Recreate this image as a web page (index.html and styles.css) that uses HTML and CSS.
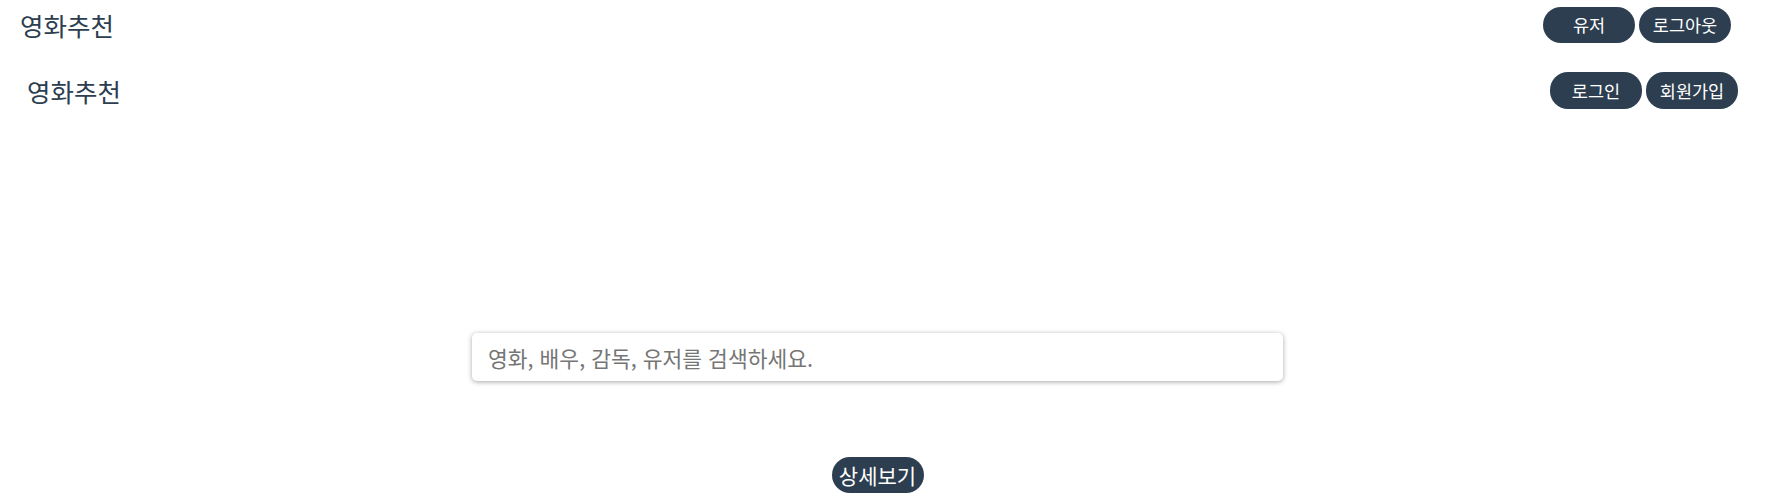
FILE: index.html
```html
<!DOCTYPE html>
<html lang="ko">
<head>
<meta charset="utf-8">
<title>영화추천</title>
<link rel="stylesheet" href="styles.css">
</head>
<body>
  <header class="nav nav-user">
    <span class="brand">영화추천</span>
    <div class="actions">
      <button class="pill">유저</button>
      <button class="pill">로그아웃</button>
    </div>
  </header>
  <header class="nav nav-guest">
    <span class="brand">영화추천</span>
    <div class="actions">
      <button class="pill">로그인</button>
      <button class="pill">회원가입</button>
    </div>
  </header>
  <main class="main">
    <div class="search">
      <input class="search-input" type="text" placeholder="영화, 배우, 감독, 유저를 검색하세요.">
    </div>
    <button class="detail">상세보기</button>
  </main>
</body>
</html>
```

FILE: styles.css
```css
* { box-sizing: border-box; }
html, body {
  margin: 0;
  background: #ffffff;
}
body {
  font-family: "Noto Sans CJK KR", "Noto Sans", sans-serif;
  color: #2c3e50;
}
.nav {
  display: flex;
  justify-content: space-between;
  align-items: center;
}
.nav-user {
  height: 50px;
  padding: 0 53px 0 20px;
}
.nav-guest {
  height: 37px;
  margin-top: 22px;
  padding: 0 46px 0 27px;
}
.brand {
  font-size: 25.5px;
  line-height: 1;
}
.actions {
  display: flex;
  gap: 4px;
}
.pill {
  width: 92px;
  height: 36px;
  border: none;
  border-radius: 18px;
  background: #2c3e50;
  color: #ffffff;
  font-family: inherit;
  font-size: 17.5px;
  padding: 0;
  line-height: 1;
}
.nav-guest .pill { height: 37px; }
.main {
  display: flex;
  flex-direction: column;
  align-items: center;
  padding-right: 29px;
  padding-top: 224px;
}
.search {
  width: 811px;
  height: 48px;
  border-radius: 5px;
  background: #ffffff;
  box-shadow: 0 1px 5px rgba(0, 0, 0, 0.35);
}
.search-input {
  width: 100%;
  height: 100%;
  border: none;
  outline: none;
  background: transparent;
  padding: 0 16px;
  font-family: inherit;
  font-size: 21.5px;
  color: #2c3e50;
}
.search-input::placeholder { color: #757575; }
.detail {
  margin-top: 76px;
  width: 92px;
  height: 36px;
  padding: 0;
  border: none;
  border-radius: 18px;
  background: #2c3e50;
  color: #ffffff;
  font-family: inherit;
  font-size: 21px;
  line-height: 1;
}
```
